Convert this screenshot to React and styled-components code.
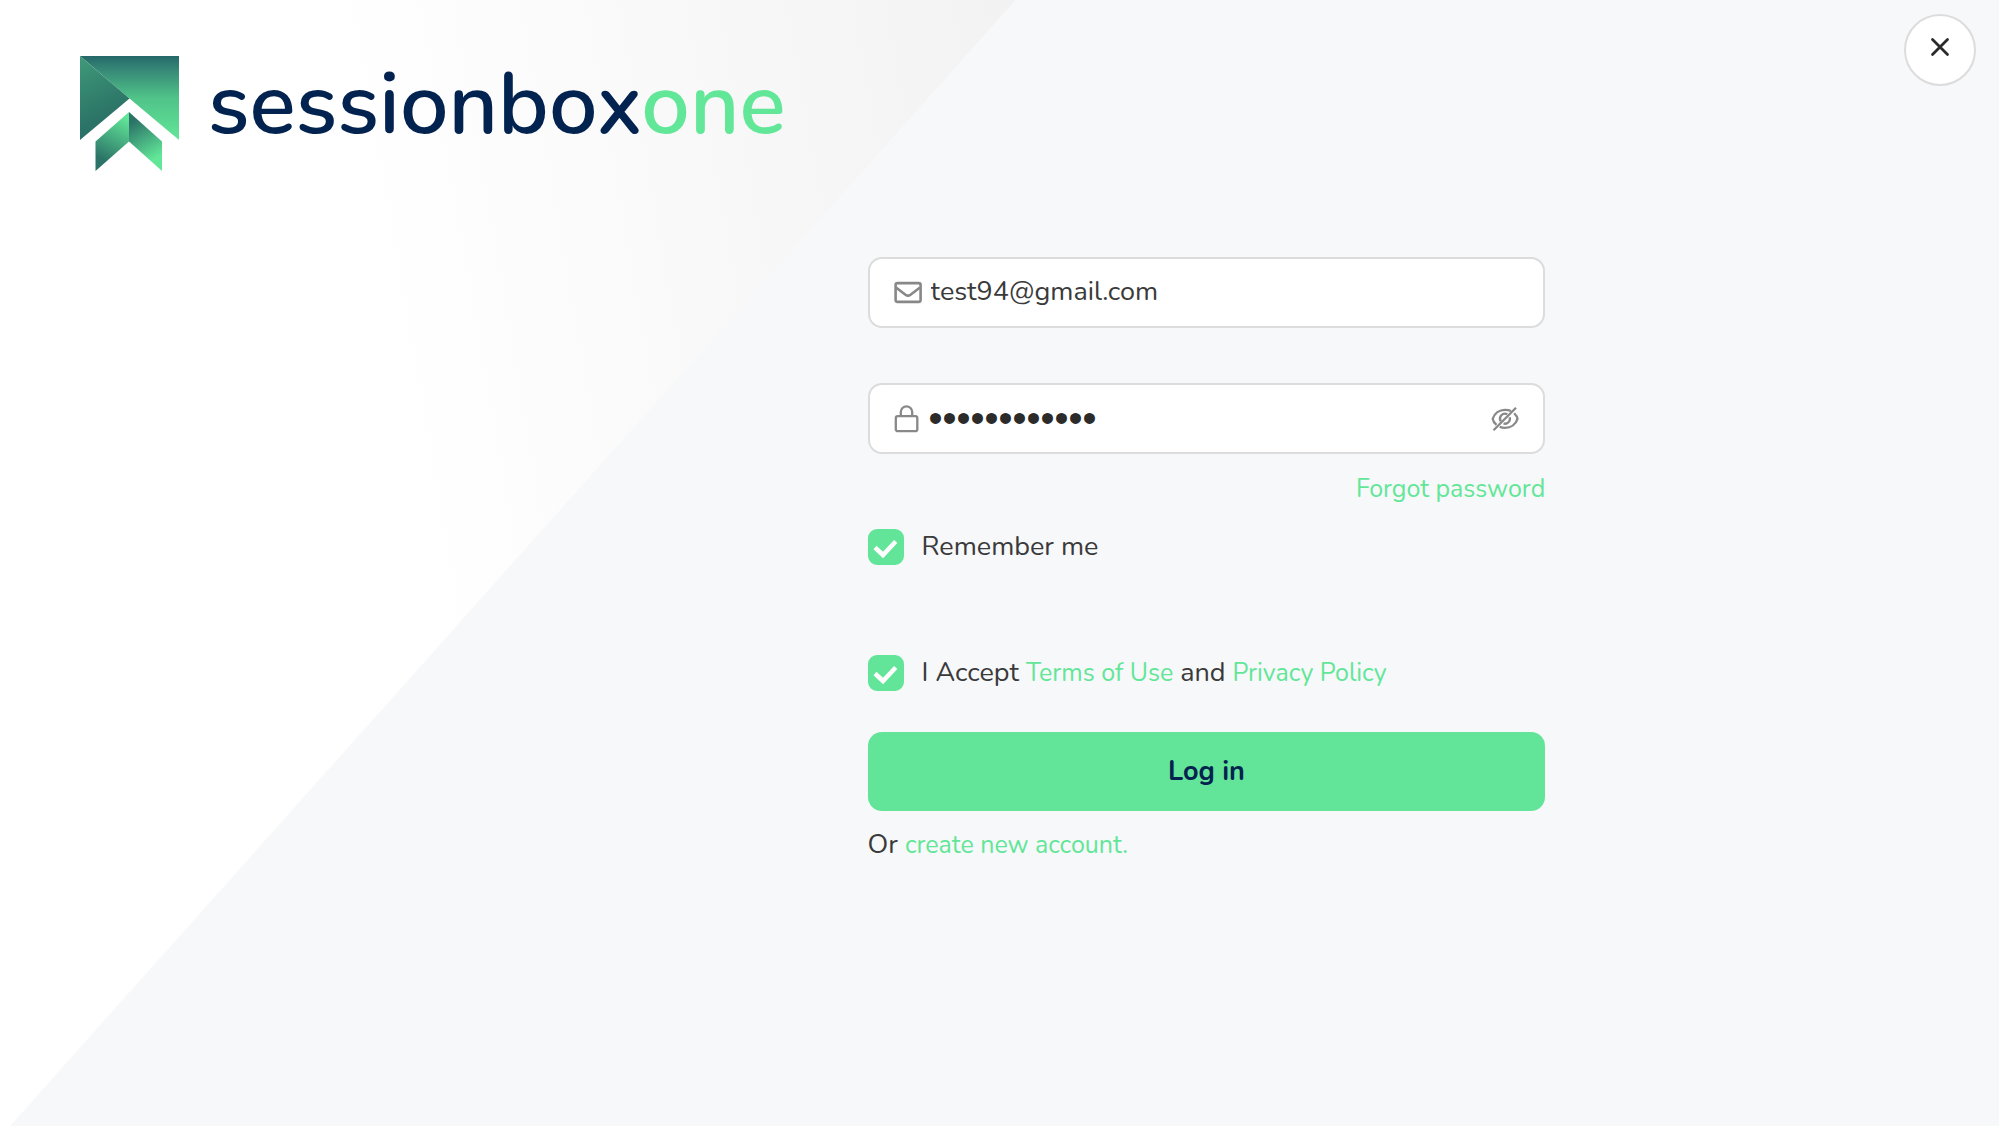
import React, { useState } from "react";
import styled, { createGlobalStyle } from "styled-components";

function LogoMark() {
  return (
    <svg width="100" height="116" viewBox="0 0 100 116" aria-hidden="true">
      <defs>
        <linearGradient id="flagTop" x1="0" y1="0" x2="0" y2="1">
          <stop offset="0" stopColor="#25686a" />
          <stop offset="0.15" stopColor="#358676" />
          <stop offset="0.5" stopColor="#50c388" />
          <stop offset="1" stopColor="#62e698" />
        </linearGradient>
        <linearGradient id="flagSide" x1="0" y1="0" x2="0.3" y2="1">
          <stop offset="0" stopColor="#3f9a78" />
          <stop offset="0.8" stopColor="#2b7367" />
          <stop offset="1" stopColor="#2b7367" />
        </linearGradient>
        <linearGradient id="tailLeft" x1="0.6" y1="0" x2="0.3" y2="1">
          <stop offset="0" stopColor="#62e698" />
          <stop offset="0.85" stopColor="#2b7367" />
        </linearGradient>
        <linearGradient id="tailRight" x1="0.3" y1="0.1" x2="0.6" y2="1">
          <stop offset="0" stopColor="#2b7367" />
          <stop offset="0.85" stopColor="#62e698" />
        </linearGradient>
      </defs>
      <path d="M0 0H99V84L49.500 42.500Z" fill="url(#flagTop)" />
      <path d="M0 0L49.500 42.500L0 84Z" fill="url(#flagSide)" />
      <path d="M49 56V85.500L15.500 115V85.500Z" fill="url(#tailLeft)" />
      <path d="M49 56L82 85.500V115L49 85.500Z" fill="url(#tailRight)" />
    </svg>
  );
}

function MailIcon() {
  return (
    <svg width="28" height="28" viewBox="0 0 28 28" fill="none" stroke="#888" strokeWidth="2.600" aria-hidden="true">
      <rect x="1.600" y="4.100" width="25" height="18.800" rx="1.800" />
      <path d="M2 8.500L11.500 15.800Q14 17.600 16.500 15.800L26 8.500" />
    </svg>
  );
}

function LockIcon() {
  return (
    <svg width="26" height="28" viewBox="0 0 26 28" fill="none" stroke="#888" strokeWidth="2.300" aria-hidden="true">
      <rect x="1.800" y="11.200" width="21.500" height="15" rx="2" />
      <path d="M6.800 11.200V7a5.700 5.700 0 0 1 11.400 0v4.200" />
    </svg>
  );
}

function EyeOffIcon() {
  return (
    <svg width="28" height="28" viewBox="0 0 28 28" fill="none" stroke="#888" strokeWidth="2.300" aria-hidden="true">
      <path d="M5.500 19.800C3.300 18 2 16 1.700 13.800C3.500 8.300 8.300 4.800 14 4.800C16.300 4.800 18.300 5.200 20 6" />
      <path d="M23.200 8.200C25 10 26.200 12 26.500 13.800C24.800 19.300 20 22.800 14 22.800C12 22.800 10.200 22.400 8.700 21.700" />
      <path d="M9.700 16.300A5 5 0 0 1 16.300 9.300M18.700 12.300A5 5 0 0 1 12.500 18.500" />
      <path d="M2.500 25.300L25 2.800" />
    </svg>
  );
}

function CheckField({ id, checked, onChange, children }) {
  return (
    <CheckRow>
      <CheckBox>
        <CheckInput id={id} type="checkbox" checked={checked} onChange={onChange} />
        <svg viewBox="0 0 36 36" aria-hidden="true">
          <path d="M7 18.500L15 26L27.700 12.500" fill="none" stroke="#fff" strokeWidth="4.500" />
        </svg>
      </CheckBox>
      <CheckLabel htmlFor={id}>{children}</CheckLabel>
    </CheckRow>
  );
}

function App() {
  const [email, setEmail] = useState("test94@gmail.com");
  const [password, setPassword] = useState("password1234");
  const [showPassword, setShowPassword] = useState(false);
  const [remember, setRemember] = useState(true);
  const [accept, setAccept] = useState(true);

  const handleSubmit = (e) => {
    e.preventDefault();
  };

  return (
    <Page>
      <GlobalStyle />
      <Header>
        <Logo href="/">
          <LogoMark />
          <LogoText>
            sessionbox<span>one</span>
          </LogoText>
        </Logo>
        <CloseButton type="button" aria-label="Close">
          <svg width="20" height="20" viewBox="0 0 20 20" aria-hidden="true">
            <path d="M2.500 2.500L17.500 17.500M17.500 2.500L2.500 17.500" stroke="#2b2b2b" strokeWidth="2.800" strokeLinecap="round" />
          </svg>
        </CloseButton>
      </Header>
      <Main>
        <Form onSubmit={handleSubmit}>
          <Field>
            <MailIcon />
            <FieldInput type="email" aria-label="Email" value={email} onChange={(e) => setEmail(e.target.value)} />
          </Field>
          <Field>
            <LockIcon />
            <FieldInput
              type={showPassword ? "text" : "password"}
              aria-label="Password"
              value={password}
              onChange={(e) => setPassword(e.target.value)}
            />
            <EyeButton type="button" aria-label="Show password" onClick={() => setShowPassword(!showPassword)}>
              <EyeOffIcon />
            </EyeButton>
          </Field>
          <ForgotRow>
            <TextLink href="/forgot">Forgot password</TextLink>
          </ForgotRow>
          <CheckField id="remember" checked={remember} onChange={() => setRemember(!remember)}>
            Remember me
          </CheckField>
          <CheckField id="accept" checked={accept} onChange={() => setAccept(!accept)}>
            I Accept <TextLink href="/terms">Terms of Use</TextLink> and{" "}
            <TextLink href="/privacy">Privacy Policy</TextLink>
          </CheckField>
          <LoginButton type="submit">Log in</LoginButton>
          <SignUp>
            Or <TextLink href="/signup">create new account.</TextLink>
          </SignUp>
        </Form>
      </Main>
    </Page>
  );
}

const GlobalStyle = createGlobalStyle`
  * {
    box-sizing: border-box;
  }

  body {
    margin: 0;
    font-family: Nunito, Lato, sans-serif;
    font-size: 27px;
    line-height: 36px;
    color: #3a3a3a;
  }
`;

const Page = styled.div`
  position: relative;
  z-index: 0;
  min-height: 100vh;
  background: #f7f8fa;

  &::before {
    content: "";
    position: absolute;
    inset: 0;
    z-index: -1;
    background: linear-gradient(80deg, #fff 24%, #f1f1f1 58%);
    clip-path: polygon(0 0, 50.8% 0, 0.5% 100%, 0 100%);
  }
`;

const Header = styled.header`
  display: flex;
  align-items: flex-start;
  justify-content: space-between;
  padding: 14px 23px 0 80px;
`;

const Logo = styled.a`
  display: flex;
  gap: 28px;
  padding-top: 42px;
  text-decoration: none;
`;

const LogoText = styled.span`
  font-size: 86px;
  font-weight: 600;
  line-height: 98px;
  color: #02224f;

  span {
    color: #62e698;
  }
`;

const CloseButton = styled.button`
  display: flex;
  align-items: center;
  justify-content: center;
  width: 72px;
  height: 72px;
  padding: 0 0 6px;
  border: 2px solid #dcdcdc;
  border-radius: 50%;
  background: #fff;
  cursor: pointer;
`;

const Main = styled.main`
  display: grid;
  grid-template-columns: 434fr 339fr 227fr;
  padding-top: 85px;

  @media (max-width: 900px) {
    grid-template-columns: 24px 1fr 24px;
  }
`;

const Form = styled.form`
  grid-column: 2;
  display: flex;
  flex-direction: column;
`;

const Field = styled.div`
  display: flex;
  align-items: center;
  height: 71px;
  padding: 0 24px;
  border: 2px solid #dcdcdc;
  border-radius: 14px;
  background: #fff;

  & + & {
    margin-top: 55px;
  }
`;

const FieldInput = styled.input`
  flex: 1;
  min-width: 0;
  padding: 0 9px 2px;
  border: 0;
  outline: 0;
  background: transparent;
  color: #3a3a3a;
  font: inherit;

  &[type="password"] {
    color: #2b2b2b;
    font-family: "Liberation Sans", sans-serif;
    font-size: 40px;
    line-height: 44px;
  }
`;

const EyeButton = styled.button`
  display: flex;
  padding: 0;
  border: 0;
  background: none;
  cursor: pointer;
`;

const TextLink = styled.a`
  font-size: 25px;
  color: #62e698;
  text-decoration: none;
`;

const ForgotRow = styled.div`
  margin-top: 17px;
  text-align: right;
`;

const CheckRow = styled.div`
  display: flex;
  align-items: center;
  gap: 18px;
  margin-top: 22px;

  & + & {
    margin-top: 90px;
  }
`;

const CheckBox = styled.span`
  display: grid;
  width: 36px;
  height: 36px;

  > * {
    grid-area: 1 / 1;
  }

  svg {
    pointer-events: none;
  }
`;

const CheckInput = styled.input`
  appearance: none;
  width: 36px;
  height: 36px;
  margin: 0;
  border: 2px solid #63e599;
  border-radius: 9px;
  background: #fff;

  &:checked {
    background: #63e599;
  }
`;

const CheckLabel = styled.label`
  cursor: pointer;
`;

const LoginButton = styled.button`
  height: 79px;
  margin-top: 41px;
  border: 0;
  border-radius: 14px;
  background: #63e599;
  color: #02224f;
  font: inherit;
  font-weight: 700;
  cursor: pointer;
`;

const SignUp = styled.p`
  margin: 16px 0 0;
`;

export default App;
